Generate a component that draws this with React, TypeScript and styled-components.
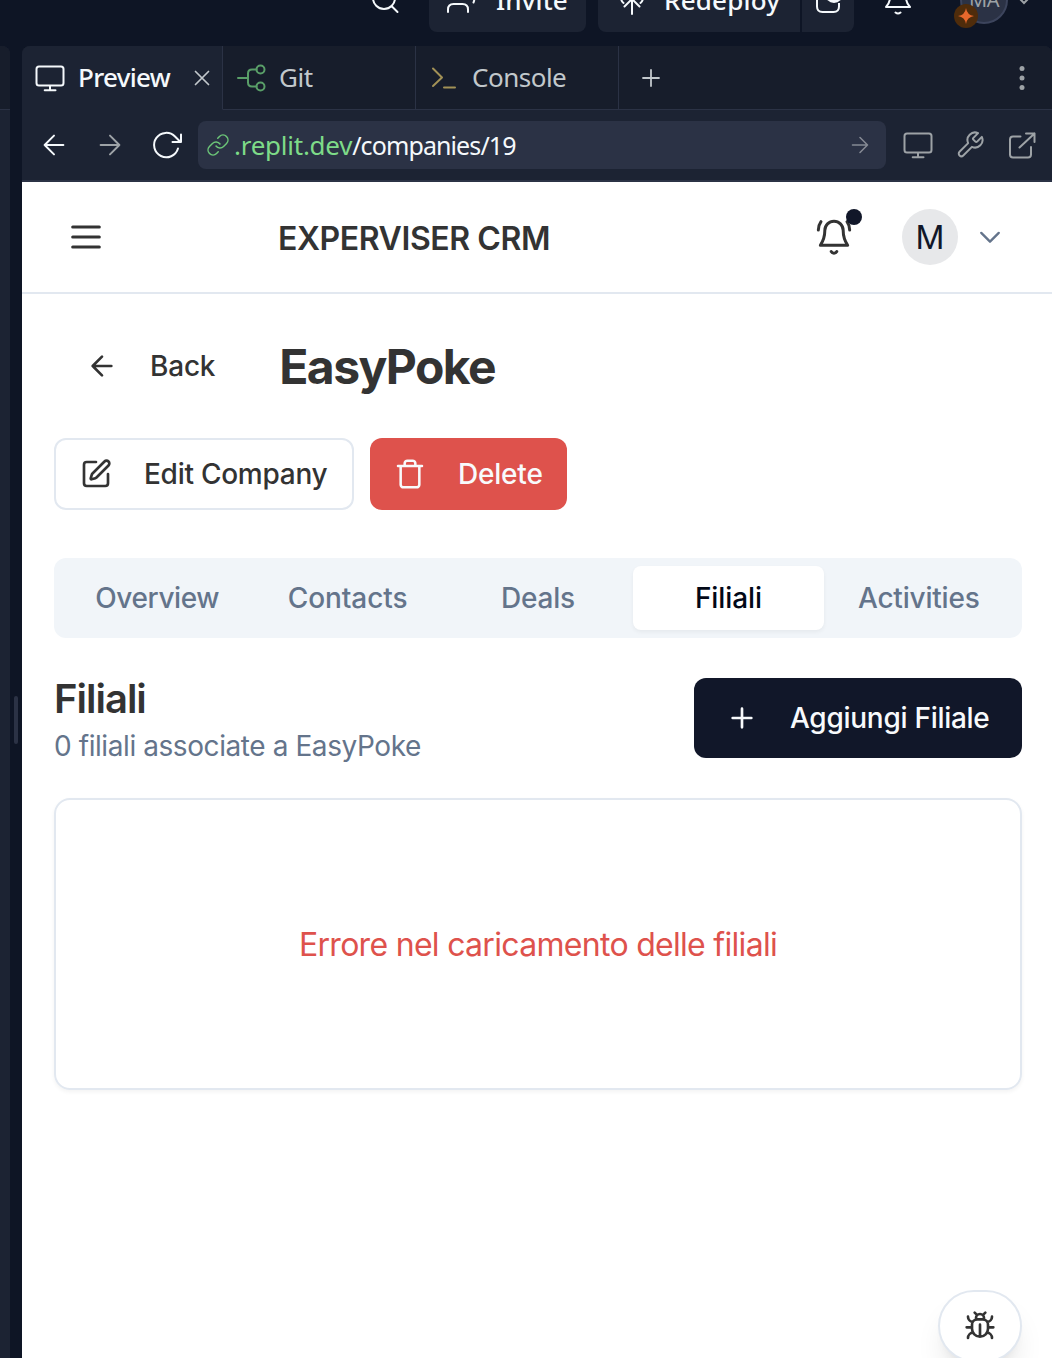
import React from "react";
import styled, { createGlobalStyle } from "styled-components";

const Global = createGlobalStyle`
  * { box-sizing: border-box; }
  body { margin: 0; background: #0e1525; }
  button { font: inherit; border: 0; padding: 0; background: none; color: inherit; }
  h1, h2, p { margin: 0; }
  svg { display: block; flex: none; }
`;

const Window = styled.div`
  width: 1052px;
  height: 1358px;
  overflow: hidden;
  display: flex;
  flex-direction: column;
  background: #0e1525;
  font-family: "Noto Sans", sans-serif;
`;

const TopBar = styled.header`
  height: 46px;
  flex: none;
  overflow: hidden;
  color: #f5f9fc;
`;

const TopRow = styled.div`
  margin-top: -32px;
  height: 64px;
  padding-left: 370px;
  display: flex;
  align-items: center;
`;

const TopButton = styled.div<{ $w: number; $ml?: number; $pl?: number; $radius?: string }>`
  width: ${(p) => p.$w}px;
  height: 64px;
  flex: none;
  margin-left: ${(p) => p.$ml ?? 0}px;
  padding-left: ${(p) => p.$pl ?? 16}px;
  display: flex;
  align-items: center;
  background: #1c2333;
  border-radius: ${(p) => p.$radius ?? "8px"};
`;

const TopIcon = styled.div<{ $ml?: number }>`
  flex: none;
  margin-left: ${(p) => p.$ml ?? 0}px;
`;

const Label = styled.span<{ $size?: number; $ls?: number; $ml?: number; $weight?: number; $lift?: number }>`
  font-size: ${(p) => p.$size ?? 26}px;
  line-height: 36px;
  font-weight: ${(p) => p.$weight ?? 400};
  letter-spacing: ${(p) => p.$ls ?? 0}px;
  margin-left: ${(p) => p.$ml ?? 0}px;
  padding-bottom: ${(p) => p.$lift ?? 0}px;
  white-space: nowrap;
`;

const UserAvatar = styled.div`
  position: relative;
  width: 48px;
  height: 48px;
  flex: none;
  margin-left: 46px;
  border-radius: 50%;
  border: 2px solid #3c445c;
  background: #2b3245;
  color: #9da2a6;
  display: flex;
  align-items: center;
  justify-content: center;
  font-size: 20px;
  letter-spacing: -0.5px;
  padding-bottom: 1px;
`;

const Spark = styled.div`
  position: absolute;
  left: -8px;
  top: 26px;
  width: 24px;
  height: 24px;
  border-radius: 50%;
  background: #4f2c0b;
`;

const Workspace = styled.div`
  flex: 1;
  min-height: 0;
  display: flex;
`;

const SidePane = styled.div`
  width: 10px;
  flex: none;
  background: #1c2333;
  border-radius: 0 8px 0 0;
  overflow: hidden;
`;

const SidePaneHead = styled.div`
  height: 64px;
  background: #171d2b;
  border-bottom: 1px solid #2b3245;
`;

const Gutter = styled.div`
  width: 12px;
  flex: none;
  padding: 650px 0 0 4px;
`;

const Grip = styled.div`
  width: 4px;
  height: 48px;
  border-radius: 2px;
  background: #2b3245;
`;

const Pane = styled.div`
  flex: 1;
  min-width: 0;
  display: flex;
  flex-direction: column;
  border-radius: 8px 8px 0 0;
  overflow: hidden;
  background: #1c2333;
`;

const TabStrip = styled.div`
  height: 64px;
  flex: none;
  display: flex;
  background: #171d2b;
`;

const PaneTab = styled.div<{ $w: number; $pl: number; $active?: boolean }>`
  width: ${(p) => p.$w}px;
  flex: none;
  padding-left: ${(p) => p.$pl}px;
  display: flex;
  align-items: center;
  color: ${(p) => (p.$active ? "#f5f9fc" : "#c2c8cc")};
  background: ${(p) => (p.$active ? "#1c2333" : "#171d2b")};
  border-right: 1px solid #2b3245;
  border-bottom: 1px solid ${(p) => (p.$active ? "#1c2333" : "#2b3245")};
`;

const StripRest = styled.div`
  flex: 1;
  display: flex;
  align-items: center;
  justify-content: space-between;
  padding: 0 26px 0 22px;
  border-bottom: 1px solid #2b3245;
`;

const AddressRow = styled.div`
  height: 72px;
  flex: none;
  display: flex;
  align-items: center;
  padding: 0 16px 0 17px;
  border-bottom: 2px solid #2b3245;
  color: #9da2a6;
`;

const NavIcons = styled.div`
  width: 159px;
  flex: none;
  display: flex;
  gap: 26px;
  color: #f5f9fc;
`;

const Address = styled.div`
  width: 688px;
  height: 48px;
  flex: none;
  display: flex;
  align-items: center;
  padding: 0 14px 0 8px;
  border-radius: 8px;
  background: #2b3245;
  color: #f5f9fc;
`;

const Host = styled.span`
  color: #7edb88;
`;

const Path = styled.span`
  font-size: 25px;
  letter-spacing: -0.9px;
`;

const Grow = styled.div`
  flex: 1;
`;

const Tools = styled.div`
  flex: 1;
  display: flex;
  align-items: center;
  justify-content: space-between;
  padding-left: 16px;
`;

const Page = styled.main`
  position: relative;
  flex: 1;
  min-height: 0;
  background: #fff;
  color: #333;
  font-family: Inter, sans-serif;
  display: flex;
  flex-direction: column;
`;

const AppHeader = styled.div`
  height: 112px;
  flex: none;
  display: flex;
  align-items: center;
  padding: 0 48px 0 44px;
  border-bottom: 2px solid #e2e8f0;
`;

const Brand = styled.div`
  margin-left: 172px;
  font-size: 32px;
  line-height: 40px;
  font-weight: 600;
  letter-spacing: -0.42px;
  white-space: nowrap;
  padding-top: 3px;
`;

const BellWrap = styled.div`
  position: relative;
`;

const BellDot = styled.span`
  position: absolute;
  left: 32px;
  top: -8px;
  width: 16px;
  height: 16px;
  border-radius: 50%;
  background: #111729;
`;

const Avatar = styled.div`
  width: 56px;
  height: 56px;
  margin: 0 18px 0 48px;
  border-radius: 50%;
  background: #e7e8ea;
  color: #111729;
  display: flex;
  align-items: center;
  justify-content: center;
  font-size: 32px;
  padding-top: 1px;
`;

const Content = styled.div`
  padding: 40px 30px 0 32px;
  display: flex;
  flex-direction: column;
`;

const TitleRow = styled.div`
  height: 64px;
  display: flex;
  align-items: center;
  padding-left: 32px;
`;

const Title = styled.h1`
  margin-left: 64px;
  padding-top: 2px;
  font-size: 48px;
  line-height: 64px;
  font-weight: 700;
  letter-spacing: -1.6px;
`;

const Actions = styled.div`
  margin-top: 40px;
  display: flex;
  gap: 16px;
`;

const Button = styled.button<{ $kind: "outline" | "danger" | "primary"; $w: number }>`
  width: ${(p) => p.$w}px;
  height: ${(p) => (p.$kind === "primary" ? 80 : 72)}px;
  display: flex;
  align-items: center;
  padding-left: ${(p) => (p.$kind === "primary" ? 32 : 24)}px;
  border-radius: 12px;
  border: ${(p) => (p.$kind === "outline" ? "2px solid #e2e8f0" : "0")};
  background: ${(p) => ({ outline: "#fff", danger: "#de524c", primary: "#111729" })[p.$kind]};
  color: ${(p) => (p.$kind === "outline" ? "#333" : "#f8fafc")};
`;

const Tabs = styled.div`
  margin-top: 48px;
  height: 80px;
  padding: 8px;
  border-radius: 12px;
  background: #f1f5f9;
  display: grid;
  grid-template-columns: repeat(5, 1fr);
`;

const Tab = styled.div<{ $active?: boolean }>`
  display: flex;
  align-items: center;
  justify-content: center;
  border-radius: 8px;
  color: ${(p) => (p.$active ? "#020817" : "#64748b")};
  background: ${(p) => (p.$active ? "#fff" : "transparent")};
  box-shadow: ${(p) => (p.$active ? "0 2px 4px rgba(0,0,0,0.05)" : "none")};
`;

const SectionHead = styled.div`
  margin-top: 40px;
  display: flex;
  justify-content: space-between;
`;

const SectionTitle = styled.h2`
  padding-top: 1px;
  font-size: 40px;
  line-height: 40px;
  font-weight: 600;
  letter-spacing: -1px;
`;

const SectionSub = styled.p`
  margin-top: 7px;
  font-size: 28px;
  line-height: 40px;
  letter-spacing: -0.42px;
  color: #64748b;
`;

const Card = styled.div`
  margin-top: 32px;
  height: 292px;
  border: 2px solid #e2e8f0;
  border-radius: 16px;
  box-shadow: 0 2px 4px rgba(0, 0, 0, 0.05);
  display: flex;
  align-items: center;
  justify-content: center;
  font-size: 32px;
  letter-spacing: -0.7px;
  color: #de524c;
`;

const BugButton = styled.button`
  position: absolute;
  left: 916px;
  top: 1108px;
  width: 84px;
  height: 72px;
  border: 2px solid #e2e8f0;
  border-radius: 36px;
  background: #fff;
  box-shadow: 0 20px 30px -6px rgba(0, 0, 0, 0.1), 0 8px 12px -8px rgba(0, 0, 0, 0.1);
  display: flex;
  align-items: center;
  justify-content: center;
`;

type IconProps = { size: number; sw?: number; color?: string; children: React.ReactNode };
const Icon = ({ size, sw = 2, color = "currentColor", children }: IconProps) => (
  <svg width={size} height={size} viewBox="0 0 24 24" fill="none" stroke={color}
    strokeWidth={sw} strokeLinecap="round" strokeLinejoin="round">{children}</svg>
);

const Monitor = () => (
  <svg width="32" height="32" viewBox="0 0 32 32" fill="none" stroke="currentColor" strokeWidth="2" strokeLinecap="round">
    <rect x="2.5" y="4.500" width="27" height="19" rx="2.500" />
    <path d="M16 24v4.200M10.700 28.200h10.800" />
  </svg>
);

const Arrow = ({ left = false, size = 32, color }: { left?: boolean; size?: number; color?: string }) => (
  <svg width={size} height={size} viewBox="0 0 32 32" fill="none" stroke={color ?? "currentColor"} strokeWidth="2.1" strokeLinecap="round" strokeLinejoin="round">
    {left ? <path d="M26 16H6M16 6L6 16l10 10" /> : <path d="M6 16h20M16 6l10 10-10 10" />}
  </svg>
);

const tabs = [
  { name: "Overview", ls: -0.4 },
  { name: "Contacts", ls: -0.1 },
  { name: "Deals", ls: -0.2 },
  { name: "Filiali", ls: -0.1 },
  { name: "Activities", ls: -0.2 },
];

export default function App() {
  return (
    <Window>
      <Global />
      <TopBar>
        <TopRow>
          <TopIcon>
            <svg width="32" height="32" viewBox="0 0 32 32" fill="none" stroke="currentColor" strokeWidth="2" strokeLinecap="round">
              <circle cx="14" cy="14" r="11" /><path d="M22 22.500l5.500 5.500" />
            </svg>
          </TopIcon>
          <TopButton $w={157} $ml={27}>
            <svg width="32" height="32" viewBox="0 0 32 32" fill="none" stroke="currentColor" strokeWidth="2" strokeLinecap="round">
              <path d="M3 28v-2.500q0-5.500 5.500-5.500h9q5.500 0 5.500 5.500V28" />
              <circle cx="13" cy="9" r="5" /><path d="M21 5a5 5 0 0 1 0 9M28.500 18.500q.8-1.700.8-3.500" />
            </svg>
            <Label $ml={19} $ls={0.1} $weight={500}>Invite</Label>
          </TopButton>
          <TopButton $w={202} $ml={12} $radius="8px 0 0 8px">
            <svg width="34" height="32" viewBox="0 0 34 32" fill="none" stroke="currentColor" strokeWidth="2" strokeLinecap="round" strokeLinejoin="round">
              <path d="M18 30V15M10.500 22.500L18 15l7.500 7.500M9.500 19q-2-1.500-2.500-4.500M26.500 19q2-1.500 2.500-4.500" />
            </svg>
            <Label $ml={16} $ls={0.2} $weight={500}>Redeploy</Label>
          </TopButton>
          <TopButton $w={52} $ml={2} $pl={12} $radius="0 8px 8px 0">
            <svg width="32" height="32" viewBox="0 0 32 32" fill="none" stroke="currentColor" strokeWidth="2">
              <path d="M12 5H8.500Q3 5 3 10.500v12Q3 28 8.500 28h11q5.500 0 5.500-5.500V19" />
              <circle cx="20" cy="10" r="9" fill="currentColor" stroke="none" />
            </svg>
          </TopButton>
          <TopIcon $ml={28}>
            <svg width="32" height="32" viewBox="0 0 32 32" fill="none" stroke="currentColor" strokeWidth="2" strokeLinecap="round" strokeLinejoin="round">
              <path d="M8 13a8 8 0 0 1 16 0q0 6 4 10H4q4-4 4-10M13.500 28.500q2.500 2 5 0" />
            </svg>
          </TopIcon>
          <UserAvatar>
            MA
            <Spark>
              <svg width="24" height="24" viewBox="0 0 24 24" fill="#e8682c"><path d="M12 4q1 7 8 8q-7 1-8 8q-1-7-8-8q7-1 8-8z" /></svg>
            </Spark>
          </UserAvatar>
          <TopIcon $ml={8}>
            <svg width="16" height="16" viewBox="0 0 16 16" fill="none" stroke="#9da2a6" strokeWidth="2"><path d="M3 6l5 5 5-5" /></svg>
          </TopIcon>
        </TopRow>
      </TopBar>

      <Workspace>
        <SidePane><SidePaneHead /></SidePane>
        <Gutter><Grip /></Gutter>
        <Pane>
          <TabStrip>
            <PaneTab $w={201} $pl={12} $active>
              <Monitor />
              <Label $ml={12} $ls={-0.7} $lift={2} $weight={500}>Preview</Label>
              <Grow />
              <svg width="40" height="32" viewBox="0 0 40 32" stroke="#c2c8cc" strokeWidth="1.7" strokeLinecap="round"><path d="M13.500 9.500l13 13M26.500 9.500l-13 13" /></svg>
            </PaneTab>
            <PaneTab $w={193} $pl={13}>
              <svg width="32" height="32" viewBox="0 0 32 32" fill="none" stroke="#599e68" strokeWidth="2" strokeLinecap="round">
                <path d="M2 16h10M20.500 7.500H16q-4 0-4 4v9q0 4 4 4h4.500" /><circle cx="24.500" cy="7.500" r="4" /><circle cx="24.500" cy="24.500" r="4" />
              </svg>
              <Label $ml={11} $ls={-0.5} $lift={2}>Git</Label>
            </PaneTab>
            <PaneTab $w={203} $pl={13}>
              <svg width="32" height="32" viewBox="0 0 32 32" fill="none" stroke="#a29156" strokeWidth="2" strokeLinecap="round" strokeLinejoin="round">
                <path d="M4 6.500l9 9-9 8.500M15 25.500h11" />
              </svg>
              <Label $ml={11} $ls={-0.5} $lift={2}>Console</Label>
            </PaneTab>
            <StripRest>
              <svg width="20" height="20" viewBox="0 0 20 20" stroke="#c2c8cc" strokeWidth="1.800" strokeLinecap="round"><path d="M10 2v16M2 10h16" /></svg>
              <svg width="8" height="28" viewBox="0 0 8 28" fill="#9da2a6"><circle cx="4" cy="4.500" r="2.500" /><circle cx="4" cy="14" r="2.500" /><circle cx="4" cy="23.500" r="2.500" /></svg>
            </StripRest>
          </TabStrip>
          <AddressRow>
            <NavIcons>
              <Arrow left size={30} />
              <Arrow size={30} color="#9da2a6" />
              <svg width="32" height="30" viewBox="0 0 32 30" fill="none" stroke="currentColor" strokeWidth="2" strokeLinecap="round" strokeLinejoin="round">
                <path d="M27 18.500A12.200 12.200 0 1 1 24 6.500L29 11.500M30 4.500v7.500h-8.500" />
              </svg>
            </NavIcons>
            <Address>
              <Icon size={24} sw={1.5} color="#6cc678">
                <path d="M10 13a5 5 0 0 0 7.540.540l3-3a5 5 0 0 0-7.070-7.070l-1.720 1.710" />
                <path d="M14 11a5 5 0 0 0-7.540-.540l-3 3a5 5 0 0 0 7.070 7.070l1.710-1.710" />
              </Icon>
              <Label $ml={4} $ls={-0.25}><Host>.replit.dev</Host><Path>/companies/19</Path></Label>
              <Grow />
              <Arrow size={24} color="#858a94" />
            </Address>
            <Tools>
              <Monitor />
              <Icon size={30} sw={1.6}><path d="M14.700 6.300a1 1 0 0 0 0 1.400l1.600 1.600a1 1 0 0 0 1.400 0l3.770-3.770a6 6 0 0 1-7.940 7.940l-6.910 6.910a2.120 2.120 0 0 1-3-3l6.910-6.910a6 6 0 0 1 7.940-7.940l-3.760 3.760z" /></Icon>
              <svg width="30" height="30" viewBox="0 0 30 30" fill="none" stroke="currentColor" strokeWidth="2" strokeLinecap="round" strokeLinejoin="round">
                <path d="M14.500 6.500H7Q4 6.500 4 9.500v15q0 3 3 3h15q3 0 3-3V17M13.500 17.500L28.500 3.500M20 3.500h8.500v8.500" />
              </svg>
            </Tools>
          </AddressRow>

          <Page>
            <AppHeader>
              <Icon size={40} sw={1.8}><path d="M4 6h16M4 12h16M4 18h16" /></Icon>
              <Brand>EXPERVISER CRM</Brand>
              <Grow />
              <BellWrap>
                <Icon size={40} sw={1.8}>
                  <path d="M6.500 8a5.500 5.500 0 0 1 11 0c0 4.500 1 6.500 2.700 9H3.800c1.700-2.500 2.700-4.500 2.700-9M10.300 20.700a1.940 1.940 0 0 0 3.400 0M4.200 2.800C3.200 4.200 2.600 5.900 2.600 7.800M21.400 7.800c0-1.900-.6-3.600-1.600-5" />
                </Icon>
                <BellDot />
              </BellWrap>
              <Avatar>M</Avatar>
              <Icon size={28} color="#64748b"><path d="M4.500 8.500l7.500 7.500 7.500-7.500" /></Icon>
            </AppHeader>
            <Content>
              <TitleRow>
                <Icon size={32}><path d="M19 12H5M12 5l-7 7 7 7" /></Icon>
                <Label $size={28} $weight={500} $ml={32} $ls={-0.2}>Back</Label>
                <Title>EasyPoke</Title>
              </TitleRow>
              <Actions>
                <Button $kind="outline" $w={300}>
                  <Icon size={32}><path d="M12 3H5a2 2 0 0 0-2 2v14a2 2 0 0 0 2 2h14a2 2 0 0 0 2-2v-7" /><path d="M18.375 2.625a1 1 0 0 1 3 3l-9.013 9.014a2 2 0 0 1-.853.505l-2.873.84a.5.5 0 0 1-.62-.62l.84-2.873a2 2 0 0 1 .506-.852z" /></Icon>
                  <Label $size={28} $weight={500} $ml={32} $ls={-0.26}>Edit Company</Label>
                </Button>
                <Button $kind="danger" $w={197}>
                  <Icon size={32} sw={1.9}><path d="M3 6h18M19 6v14c0 1-1 2-2 2H7c-1 0-2-1-2-2V6M8 6V4c0-1 1-2 2-2h4c1 0 2 1 2 2v2" /></Icon>
                  <Label $size={28} $weight={500} $ml={32} $ls={-0.2}>Delete</Label>
                </Button>
              </Actions>
              <Tabs>
                {tabs.map((t) => (
                  <Tab key={t.name} $active={t.name === "Filiali"}>
                    <Label $size={28} $weight={500} $ls={t.ls}>{t.name}</Label>
                  </Tab>
                ))}
              </Tabs>
              <SectionHead>
                <div>
                  <SectionTitle>Filiali</SectionTitle>
                  <SectionSub>0 filiali associate a EasyPoke</SectionSub>
                </div>
                <Button $kind="primary" $w={328}>
                  <Icon size={32}><path d="M5 12h14M12 5v14" /></Icon>
                  <Label $size={28} $weight={500} $ml={32} $ls={-0.28}>Aggiungi Filiale</Label>
                </Button>
              </SectionHead>
              <Card>Errore nel caricamento delle filiali</Card>
            </Content>
            <BugButton aria-label="Report a bug">
              <Icon size={32}>
                <path d="M12 20v-9M14 7a4 4 0 0 1 4 4v3a6 6 0 0 1-12 0v-3a4 4 0 0 1 4-4zM14.120 3.880L16 2M21 21a4 4 0 0 0-3.810-4M21 5a4 4 0 0 1-3.550 3.970M22 13h-4M3 21a4 4 0 0 1 3.810-4M3 5a4 4 0 0 0 3.550 3.970M6 13H2M8 2l1.880 1.880M9 7.130V6a3 3 0 1 1 6 0v1.130" />
              </Icon>
            </BugButton>
          </Page>
        </Pane>
      </Workspace>
    </Window>
  );
}
